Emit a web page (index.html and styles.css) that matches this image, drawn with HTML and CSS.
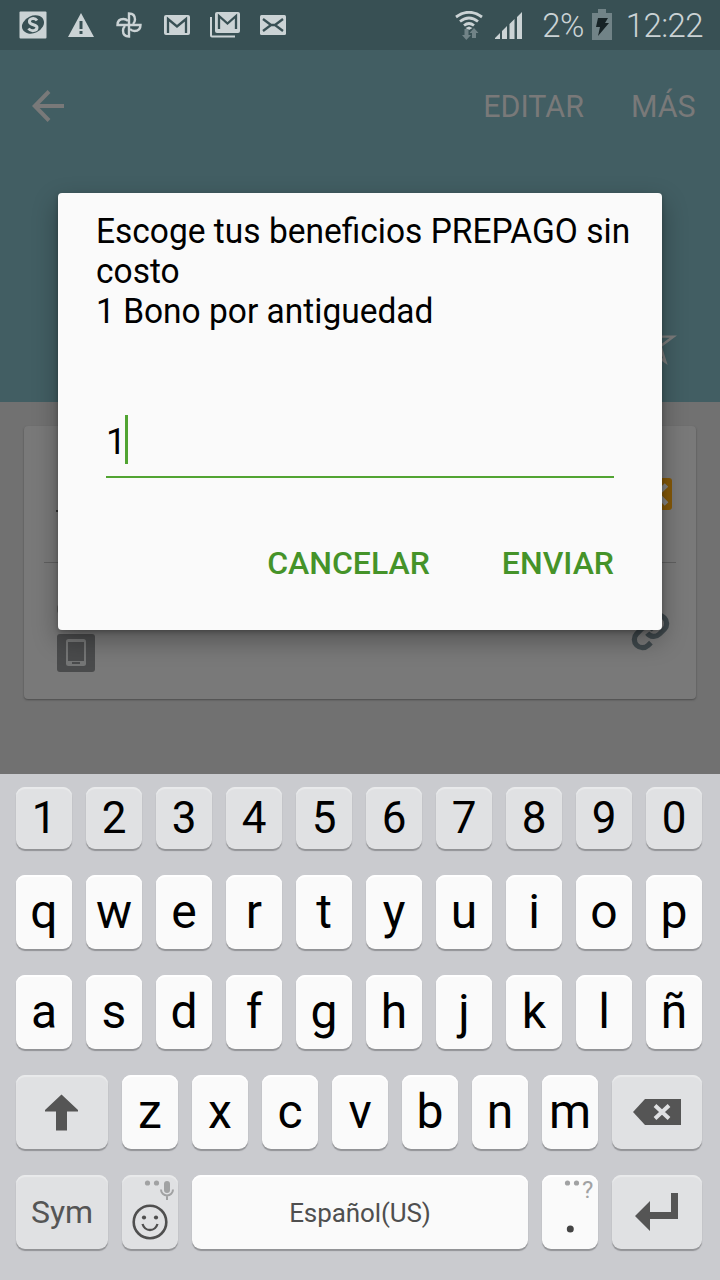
FILE: index.html
```html
<!DOCTYPE html>
<html lang="es">
<head>
<meta charset="utf-8">
<title>Escoge tus beneficios</title>
<link rel="stylesheet" href="styles.css">
</head>
<body>
<div class="screen">
  <header class="status">
    <div class="notifications">
      <svg width="28" height="28" viewBox="0 0 28 28"><rect x=".5" y=".5" width="27" height="27" rx="1" fill="#cbd3d5"/><ellipse cx="14" cy="13.500" rx="11.500" ry="8.500" transform="rotate(-25 14 13.500)" fill="#385054"/><path d="M18 9.500C15.500 6 10 7.500 10.500 11c.5 3.500 7.500 2 7.500 5.500 0 3.500-6 4.500-8.500 1" fill="none" stroke="#cbd3d5" stroke-width="3"/></svg>
      <svg width="26" height="24" viewBox="0 0 26 24"><path fill="#cbd3d5" fill-rule="evenodd" d="M13 0 26 24H0ZM11.500 8v8h3V8ZM11.500 18v3h3v-3Z"/></svg>
      <svg width="26" height="26" viewBox="0 0 26 26" fill="none" stroke="#cbd3d5" stroke-width="2.400"><path d="M13 13V1.500C17 1.500 19 4 19 7.500 19 9 18 11 17 12"/><path d="M13 13V1.500C17 1.500 19 4 19 7.500 19 9 18 11 17 12" transform="rotate(90 13 13)"/><path d="M13 13V1.500C17 1.500 19 4 19 7.500 19 9 18 11 17 12" transform="rotate(180 13 13)"/><path d="M13 13V1.500C17 1.500 19 4 19 7.500 19 9 18 11 17 12" transform="rotate(270 13 13)"/></svg>
      <svg width="26" height="20" viewBox="0 0 26 20"><rect width="26" height="20" rx="2" fill="#cbd3d5"/><path d="M4 18V4l9 7.500L22 4v14" fill="none" stroke="#385054" stroke-width="2.300"/></svg>
      <svg width="31" height="26" viewBox="0 0 31 26"><rect x="5" width="25" height="21" rx="2" fill="#cbd3d5"/><path d="M9 17V4l8.500 7.500L26 4v13" fill="none" stroke="#385054" stroke-width="2.300"/><path d="M1 5v18.500q0 1 1 1h23" fill="none" stroke="#cbd3d5" stroke-width="2"/></svg>
      <svg width="26" height="20" viewBox="0 0 26 20"><rect width="26" height="20" rx="1.500" fill="#cbd3d5"/><path d="m3 4 8 6h4l8-6M3 16l8-6m4 0 8 6" fill="none" stroke="#385054" stroke-width="2.300"/></svg>
    </div>
    <div class="system">
      <svg class="wifi" width="28" height="29" viewBox="0 0 28 29"><g fill="none" stroke="#cbd3d5" stroke-width="2.800"><path d="M1 6Q14-3.500 27 6"/><path d="M5 10.500q9-7 18 0"/><path d="M9 14.500q5-4 10 0"/></g><path d="m10.500 17 3.500-1.500 3.500 1.500-3.500 2z" fill="#cbd3d5"/><path d="M9.500 18h4v6H16l-4.700 5L7 24h2.500zM17 27v-5h-2.500l4.500-5 4.500 5H21v5z" fill="#718387"/></svg>
      <svg class="signal" width="28" height="28" viewBox="0 0 28 28"><path fill="#cbd3d5" d="M0 28v-1l5-5v6zM7 28v-8l5-5v13zM14.500 28V13l5-5v20zM22 28V6l5-5v27z"/></svg>
      <span class="percent">2%</span>
      <svg class="battery" width="20" height="31" viewBox="0 0 20 31"><path fill="#718387" d="M0 4h6V0h8v4h6v27H0z"/><path fill="#172326" d="M6 9h10l-3 5h4L6 27l2-9H4z"/></svg>
      <span class="clock">12:22</span>
    </div>
  </header>

  <section class="hero">
    <svg width="32" height="34" viewBox="0 0 32 34" fill="none" stroke="#797979" stroke-width="4"><path d="M32 17H3M17 2.500 2.800 17 17 31.500"/></svg>
    <nav class="actions"><span>EDITAR</span><span>MÁS</span></nav>
    <svg class="star" width="50" height="50" viewBox="0 0 50 50"><path d="m25 3 5.200 15.400 16.300.2-13 9.700 4.900 15.500L25 34.500l-13.400 9.300 4.900-15.500-13-9.700 16.300-.2z" fill="none" stroke="#7c7c7c" stroke-width="2.500"/></svg>
  </section>

  <main class="content">
    <div class="card">
      <div class="entry entry-top">
        <span class="mark"></span>
        <svg width="34" height="32" viewBox="0 0 34 32"><rect width="34" height="32" rx="3" fill="#845808"/><path d="M28.500 7 19 16l9.500 10M6 7l9 9-9 10" fill="none" stroke="#858585" stroke-width="5"/></svg>
      </div>
      <div class="entry entry-bottom">
        <div class="phone">
          <span class="sliver"></span>
          <svg width="38" height="38" viewBox="0 0 38 38"><rect width="38" height="38" rx="3" fill="#4a4b4c"/><rect x="9" y="5" width="20" height="27" rx="2.500" fill="#757676"/><path d="M11 8h16v19H11zM15 28h8v2h-8z" fill="#4a4b4c"/></svg>
        </div>
        <svg width="39" height="39" viewBox="0 0 24 24" fill="none" stroke="#3f484c" stroke-width="3.200"><path d="M10 13a5 5 0 0 0 7.540.540l3-3a5 5 0 0 0-7.070-7.070l-1.720 1.710"/><path d="M14 11a5 5 0 0 0-7.540-.540l-3 3a5 5 0 0 0 7.070 7.070l1.710-1.710"/></svg>
      </div>
    </div>
  </main>

  <section class="keyboard">
    <div class="row digits"><b class="key">1</b><b class="key">2</b><b class="key">3</b><b class="key">4</b><b class="key">5</b><b class="key">6</b><b class="key">7</b><b class="key">8</b><b class="key">9</b><b class="key">0</b></div>
    <div class="row"><b class="key">q</b><b class="key">w</b><b class="key">e</b><b class="key">r</b><b class="key">t</b><b class="key">y</b><b class="key">u</b><b class="key">i</b><b class="key">o</b><b class="key">p</b></div>
    <div class="row"><b class="key">a</b><b class="key">s</b><b class="key">d</b><b class="key">f</b><b class="key">g</b><b class="key">h</b><b class="key">j</b><b class="key">k</b><b class="key">l</b><b class="key">ñ</b></div>
    <div class="row">
      <b class="key wide gray"><svg width="34" height="37" viewBox="0 0 34 37"><path d="M16.500.5 33 16v1.500H22v19H11v-19H0V16z" fill="#555"/></svg></b>
      <b class="key">z</b><b class="key">x</b><b class="key">c</b><b class="key">v</b><b class="key">b</b><b class="key">n</b><b class="key">m</b>
      <b class="key end gray"><svg width="48" height="26" viewBox="0 0 48 26"><path d="M0 13 12 0h36v26H12z" fill="#555"/><path d="m22 6.500 14 13m0-13-14 13" stroke="#e0e1e3" stroke-width="4"/></svg></b>
    </div>
    <div class="row">
      <b class="key wide gray sym">Sym</b>
      <b class="key gray"><svg width="56" height="74" viewBox="0 0 56 74"><g fill="#a1a2a3"><circle cx="25.500" cy="8" r="2.600"/><circle cx="34.500" cy="8" r="2.600"/><rect x="42" y="6" width="6" height="12" rx="3"/></g><path d="M39 14.500a6 6 0 0 0 12 0M45 20.500V25" fill="none" stroke="#a1a2a3" stroke-width="2"/><circle cx="28" cy="47" r="16.300" fill="none" stroke="#4f4f4f" stroke-width="2.600"/><circle cx="22" cy="42.500" r="2.100" fill="#4f4f4f"/><circle cx="34" cy="42.500" r="2.100" fill="#4f4f4f"/><path d="M20.500 49q2 6 7.500 6t7.500-6" fill="none" stroke="#4f4f4f" stroke-width="2.300"/></svg></b>
      <b class="key space">Español(US)</b>
      <b class="key"><svg width="56" height="74" viewBox="0 0 56 74"><circle cx="25.500" cy="8" r="2.600" fill="#a1a2a3"/><circle cx="34.500" cy="8" r="2.600" fill="#a1a2a3"/><text class="hint" x="40" y="23">?</text><circle cx="28.300" cy="54" r="3.500" fill="#444"/></svg></b>
      <b class="key end gray enter"><svg width="43" height="38" viewBox="0 0 43 38"><path d="M36 0h7v26H15v12L0 23 15 8v11h21z" fill="#555"/></svg></b>
    </div>
  </section>

  <div class="dialog">
    <p class="message">Escoge tus beneficios PREPAGO sin costo<br>1 Bono por antiguedad</p>
    <div class="field"><span>1</span><i class="caret"></i></div>
    <div class="buttons"><span>CANCELAR</span><span>ENVIAR</span></div>
  </div>
</div>
</body>
</html>
```

FILE: styles.css
```css
* { box-sizing: border-box; }
body { margin: 0; font-family: Roboto, sans-serif; }
svg { display: block; flex: none; }
.screen { position: relative; width: 720px; height: 1280px; overflow: hidden; display: flex; flex-direction: column; }

.status { height: 50px; background: #385054; padding: 0 17px 0 19px; display: flex; align-items: center; justify-content: space-between; color: #cbd3d5; font-size: 33px; line-height: 50px; }
.notifications { display: flex; align-items: center; gap: 22px; }
.notifications svg:nth-child(2) { margin-left: -1px; }
.notifications svg:nth-child(5) { margin-left: -2px; }
.notifications svg:nth-child(6) { margin-left: -3px; }
.system { display: flex; align-items: center; font-weight: 300; }
.percent, .clock { padding-top: 2px; letter-spacing: -.6px; }
.signal { margin-left: 12px; }
.percent { margin-left: 19px; }
.battery { margin-left: 8px; margin-top: -2px; }
.clock { margin-left: 14px; }

.hero { position: relative; height: 352px; background: #425e63; padding: 39px 24px 0 32px; display: flex; justify-content: space-between; align-items: flex-start; }
.actions { display: flex; gap: 48px; padding-top: 1px; font-size: 31px; line-height: 34px; color: #797979; transform: scaleX(.98); transform-origin: right; }
.star { position: absolute; left: 627px; top: 268px; }

.content { height: 372px; background: #717171; padding: 24px; }
.card { height: 273px; background: #797979; border-radius: 4px; box-shadow: 0 1px 2px #4b4b4b; padding: 0 20px; }
.entry { display: flex; justify-content: space-between; }
.entry-top { height: 137px; border-bottom: 1px solid #606060; padding: 52px 4px 0 12px; }
.mark { width: 6px; height: 2px; margin-top: 32px; background: #333; }
.entry-bottom { padding: 41px 6px 0 13px; }
.entry-bottom > svg { margin-top: 8px; }
.phone { display: flex; flex-direction: column; gap: 20px; }
.sliver { width: 8px; height: 10px; border-radius: 5px; background: #5a5a5a; }

.keyboard { height: 506px; background: #cacbcf; padding: 13px 18px 0 16px; display: flex; flex-direction: column; gap: 26px; }
.row { display: flex; gap: 14px; height: 74px; }
.digits { height: 62px; }
.key { width: 56px; flex: none; display: flex; align-items: center; justify-content: center; background: #fafafa; border-radius: 9px; box-shadow: 0 2px 1px #929396, inset 0 2px 1px #fff; font-size: 48px; font-weight: 400; line-height: 74px; color: #000; }
.digits .key { font-size: 44px; line-height: 62px; }
.digits .key, .gray { background: #e0e1e3; box-shadow: 0 2px 1px #929396, inset 0 2px 1px #e9eaeb; }
.wide { width: 92px; }
.end { width: 90px; }
.enter { padding-right: 2px; }
.space { width: 336px; padding-top: 2px; font-size: 26px; letter-spacing: -.1px; color: #4f4f4f; }
.sym { font-size: 32px; color: #555; }
.hint { font-size: 24px; fill: #a1a2a3; }

.dialog { position: absolute; left: 58px; top: 193px; width: 604px; height: 437px; background: #fafafa; border-radius: 4px; box-shadow: 0 10px 26px rgba(0,0,0,.32), 0 2px 5px rgba(0,0,0,.25); padding: 18px 0 0 38px; }
.message { margin: 0; width: 560px; font-size: 34.5px; line-height: 40px; color: #000; transform: scaleX(.971); transform-origin: left; }
.field { display: flex; align-items: flex-start; width: 508px; height: 63px; margin: 84px 0 0 10px; border-bottom: 2px solid #51a432; font-size: 36px; line-height: 54px; }
.caret { width: 3px; height: 49px; background: #51a432; margin-left: -1px; }
.buttons { display: flex; justify-content: flex-end; gap: 72px; padding: 66px 48px 0 0; font-size: 32px; line-height: 38px; font-weight: 500; color: #459329; }
```
